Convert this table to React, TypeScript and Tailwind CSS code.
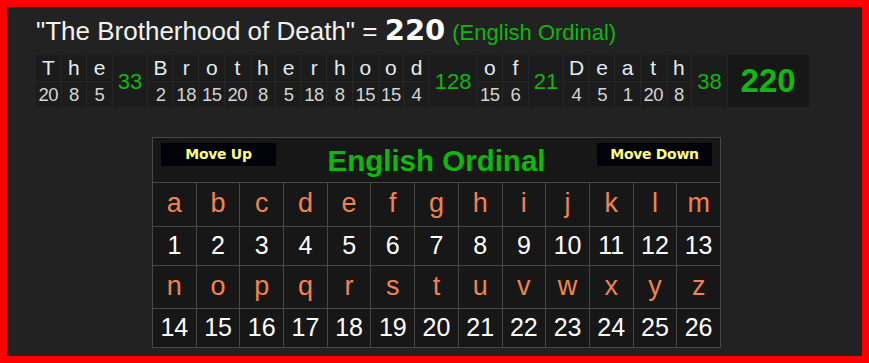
const words = [
  { letters: [["T", 20], ["h", 8], ["e", 5]], sum: 33 },
  {
    letters: [["B", 2], ["r", 18], ["o", 15], ["t", 20], ["h", 8], ["e", 5], ["r", 18], ["h", 8], ["o", 15], ["o", 15], ["d", 4]],
    sum: 128,
  },
  { letters: [["o", 15], ["f", 6]], sum: 21 },
  { letters: [["D", 4], ["e", 5], ["a", 1], ["t", 20], ["h", 8]], sum: 38 },
] as { letters: [string, number][]; sum: number }[];

const alphabet = "abcdefghijklmnopqrstuvwxyz".split("");

function LetterCell({ ch, n }: { ch: string; n: number }) {
  return (
    <div className="flex flex-col w-[25.6px] border-r border-[#272727]">
      <div className="h-[27px] flex items-center justify-center text-[21px] text-[#e2ecf4] border-b border-[#272727]">{ch}</div>
      <div className="h-[25px] flex items-center justify-center text-[18.5px] text-[#d4d4d4] tracking-[-0.5px]">{n}</div>
    </div>
  );
}

function AlphaRows({ start }: { start: number }) {
  const chunk = alphabet.slice(start, start + 13);
  return (
    <>
      <tr className="h-[43px]">
        {chunk.map((c) => (
          <td key={c} className="border border-[#474747] text-center text-[27px] text-[#f0834f] pb-[2px]">{c}</td>
        ))}
      </tr>
      <tr className="h-[39px]">
        {chunk.map((c, i) => (
          <td key={c} className="border border-[#474747] text-center text-[25px] text-white">{start + i + 1}</td>
        ))}
      </tr>
    </>
  );
}

const btn =
  "w-[115px] h-[23px] bg-[#02020a] text-[#ffff80] font-bold text-[14px] font-['DejaVu_Sans',Tahoma,sans-serif] tracking-[-0.3px]";

export default function App() {
  return (
    <div className="w-[869px] h-[363px] border-[7px] border-[#ff0000] bg-[#222222] pl-[29px] pt-[7px] font-['Liberation_Sans',Arial,sans-serif]">
      <div className="flex items-baseline h-[38px] leading-none pt-[2px]">
        <span className="text-[26px] text-[#f2f2f2] whitespace-pre">"The Brotherhood of Death" = </span>
        <span className="text-[29px] font-bold text-white font-['DejaVu_Sans',Verdana,sans-serif]">220</span>
        <span className="text-[22px] text-[#0cb80c] ml-[7px]">(English Ordinal)</span>
      </div>

      <div className="mt-[3px] flex w-fit bg-[#1c1c1c]">
        {words.map((w, wi) => (
          <div key={wi} className="flex">
            {w.letters.map(([ch, n], i) => (
              <LetterCell key={i} ch={ch} n={n} />
            ))}
            <div className="px-[5px] flex items-center text-[22px] text-[#11b611] border-r border-[#272727]">{w.sum}</div>
          </div>
        ))}
        <div className="w-[81px] flex items-center justify-center bg-[#171717] text-[33px] font-bold text-[#10b810]">220</div>
      </div>

      <table className="mt-[30px] ml-[116px] w-[569px] border-collapse bg-[#171717] table-fixed">
        <tbody>
          <tr className="h-[45px]">
            <td colSpan={13} className="border border-[#474747] p-0 align-top">
              <div className="flex items-start px-[8px] pt-[5px]">
                <button className={btn}>Move Up</button>
                <div className="flex-1 text-center text-[29.5px] font-bold text-[#0cb80c] leading-none pt-[3px]">English Ordinal</div>
                <button className={btn}>Move Down</button>
              </div>
            </td>
          </tr>
          <AlphaRows start={0} />
          <AlphaRows start={13} />
        </tbody>
      </table>
    </div>
  );
}
